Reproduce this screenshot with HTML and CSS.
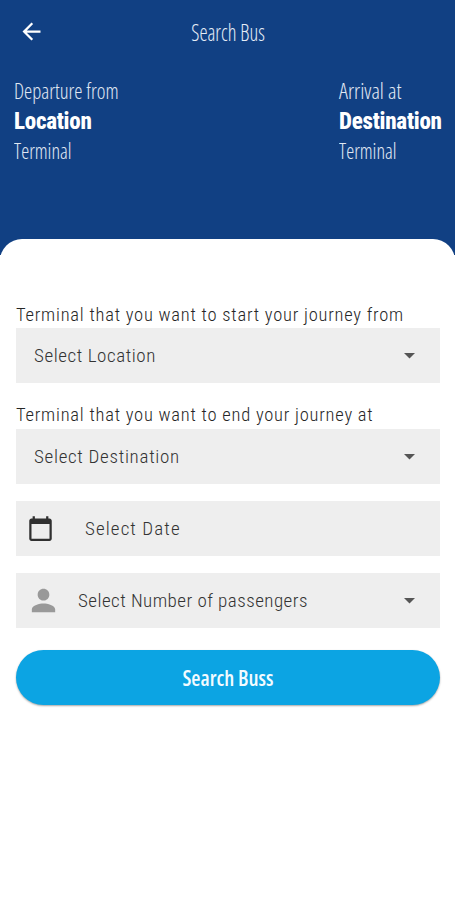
FILE: index.html
```
<!DOCTYPE html>
<html lang="en">
<head>
  <meta charset="utf-8">
  <title>Search Bus</title>
  <link rel="stylesheet" href="styles.css">
</head>
<body>
  <header class="hero">
    <div class="bar">
      <svg class="back" viewBox="0 0 24 24"><path d="M20 11H7.83l5.59-5.59L12 4l-8 8 8 8 1.41-1.41L7.83 13H20z"/></svg>
      <h1 class="title">Search Bus</h1>
    </div>
    <div class="route">
      <div class="stop">
        <span class="caption">Departure from</span>
        <strong class="place">Location</strong>
        <span class="terminal">Terminal</span>
      </div>
      <div class="stop arrival">
        <span class="caption wide">Arrival at</span>
        <strong class="place">Destination</strong>
        <span class="terminal">Terminal</span>
      </div>
    </div>
  </header>
  <main class="sheet">
    <div class="label">Terminal that you want to start your journey from</div>
    <div class="field select">
      <span class="value">Select Location</span>
      <svg class="caret" viewBox="0 0 11 6"><path d="M0 0h11L5.5 5.6z"/></svg>
    </div>
    <div class="label second">Terminal that you want to end your journey at</div>
    <div class="field select">
      <span class="value destination">Select Destination</span>
      <svg class="caret" viewBox="0 0 11 6"><path d="M0 0h11L5.5 5.6z"/></svg>
    </div>
    <div class="field date">
      <svg class="calendar" viewBox="0 0 24 24"><path d="M20 3h-1V1h-2v2H7V1H5v2H4c-1.1 0-2 .9-2 2v16c0 1.1.9 2 2 2h16c1.1 0 2-.9 2-2V5c0-1.1-.9-2-2-2zm0 18H4V8h16v13z"/></svg>
      <span class="value">Select Date</span>
    </div>
    <div class="field passengers">
      <svg class="person" viewBox="0 0 24 24"><path d="M12 12c2.21 0 4-1.79 4-4s-1.79-4-4-4-4 1.79-4 4 1.79 4 4 4zm0 2c-2.67 0-8 1.34-8 4v2h16v-2c0-2.66-5.33-4-8-4z"/></svg>
      <span class="value">Select Number of passengers</span>
      <svg class="caret" viewBox="0 0 11 6"><path d="M0 0h11L5.5 5.6z"/></svg>
    </div>
    <button class="search">Search Buss</button>
  </main>
</body>
</html>
```
FILE: styles.css
```
* { box-sizing: border-box; }

body {
  margin: 0;
  min-height: 900px;
  background: #fff;
  font-family: Roboto, "Liberation Sans", sans-serif;
  font-stretch: 75%;
  overflow: hidden;
}

.hero {
  height: 255px;
  background: #114083;
  color: #fff;
}

.bar {
  display: grid;
  grid-template-columns: 46px 1fr 45px;
  align-items: center;
  height: 64px;
}

.back {
  width: 27px;
  height: 27px;
  margin: 0 0 1px 18px;
  fill: #fff;
}

.title {
  margin: 0;
  font: 300 23px/64px "Open Sans", sans-serif;
  font-stretch: 75%;
  text-align: center;
  transform: scaleX(.89);
  color: #e6edf7;
}

.route {
  display: flex;
  justify-content: space-between;
  padding: 11px 13px 0 14px;
}

.stop {
  display: flex;
  flex-direction: column;
  align-items: flex-start;
  white-space: nowrap;
}

.arrival { width: 103px; }

.caption,
.terminal {
  font-family: "Open Sans", sans-serif;
  font-weight: 300;
  font-size: 22px;
  color: #e0e8f3;
  transform-origin: left;
}

.caption {
  line-height: 30px;
  transform: scaleX(.94);
}

.caption.wide { transform: none; }

.terminal {
  line-height: 22px;
  transform: scaleX(.92);
}

.place {
  font-weight: 800;
  font-size: 23px;
  line-height: 34px;
  letter-spacing: -.25px;
}

.sheet {
  position: relative;
  height: 661px;
  margin-top: -16px;
  padding: 63px 15px 0 16px;
  border-radius: 22px 22px 0 0;
  background: #fff;
}

.label {
  font-size: 18.5px;
  font-weight: 300;
  line-height: 26px;
  letter-spacing: .76px;
  color: #262626;
  white-space: nowrap;
}

.label.second {
  margin-top: 19px;
  line-height: 27px;
}

.field {
  display: flex;
  align-items: center;
  height: 55px;
  background: #eee;
  color: #333;
  white-space: nowrap;
}

.value {
  font-size: 19px;
  font-weight: 300;
  line-height: 24px;
  padding-top: 1px;
  letter-spacing: .57px;
}

.select { padding-left: 18px; }
.value.destination { letter-spacing: .7px; }

.caret {
  width: 11px;
  height: 6px;
  margin: 1px 25px 0 auto;
  fill: #555;
}

.date {
  margin-top: 17px;
  padding-left: 11px;
}

.calendar {
  width: 27px;
  height: 27px;
  margin-right: 31px;
  fill: #303030;
}

.date .value {
  padding-top: 0;
  letter-spacing: 1.1px;
}

.passengers {
  margin-top: 17px;
  padding-left: 10px;
}

.person {
  width: 35px;
  height: 35px;
  margin-right: 17px;
  fill: #999;
}

.passengers .value { letter-spacing: .46px; }

.search {
  display: block;
  width: 100%;
  height: 55px;
  margin-top: 22px;
  padding: 2px 0 0;
  border: 0;
  border-radius: 28px;
  background: #0ca4e3;
  box-shadow: 0 1px 2px rgba(0, 0, 0, .35);
  color: #f2fbff;
  font: 600 21px/53px "Open Sans", sans-serif;
  font-stretch: 75%;
}
```
